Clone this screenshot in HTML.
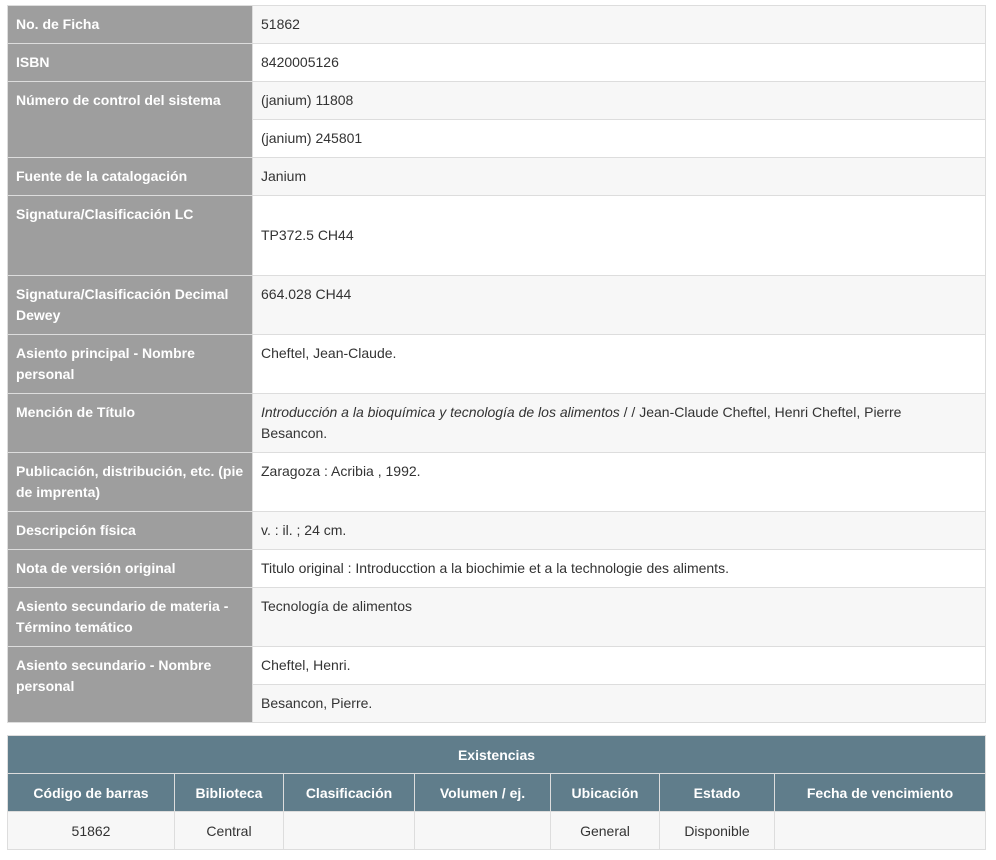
<!DOCTYPE html>
<html><head><meta charset="utf-8"><style>
body{margin:0;background:#fff;font-family:"Liberation Sans",sans-serif;font-size:14px;color:#333;}
table{border-collapse:collapse;position:absolute;left:7px;width:979px;}
#t1{top:5px;}
#t1 td{border:1px solid #ddd;padding:0 8px;vertical-align:top;line-height:21px;}
#t1 td.l{background:#9e9e9e;color:#fff;font-weight:bold;width:228px;border-color:#ddd;}
#t1 td.v{padding-top:8px;padding-bottom:8px;}
#t1 td.l{padding-top:8px;}
.g{background:#f7f7f7;}
#t2{top:735px;text-align:center;}
#t2 th{background:#607d8b;color:#fff;font-weight:bold;height:37px;padding:0;border:1px solid #ddd;}
#t2 td{height:37px;padding:0;border:1px solid #ddd;background:#f7f7f7;}
</style></head><body>
<table id="t1">
<tr style="height:38px"><td class="l">No. de Ficha</td><td class="v g">51862</td></tr>
<tr style="height:38px"><td class="l">ISBN</td><td class="v">8420005126</td></tr>
<tr style="height:38px"><td class="l" rowspan="2">Número de control del sistema</td><td class="v g">(janium) 11808</td></tr>
<tr style="height:38px"><td class="v">(janium) 245801</td></tr>
<tr style="height:38px"><td class="l">Fuente de la catalogación</td><td class="v g">Janium</td></tr>
<tr style="height:80px"><td class="l">Signatura/Clasificación LC</td><td class="v" style="vertical-align:middle">TP372.5 CH44</td></tr>
<tr style="height:59px"><td class="l">Signatura/Clasificación Decimal Dewey</td><td class="v g">664.028 CH44</td></tr>
<tr style="height:59px"><td class="l">Asiento principal - Nombre personal</td><td class="v">Cheftel, Jean-Claude.</td></tr>
<tr style="height:59px"><td class="l">Mención de Título</td><td class="v g"><i>Introducción a la bioquímica y tecnología de los alimentos</i> / / Jean-Claude Cheftel, Henri Cheftel, Pierre<br>Besancon.</td></tr>
<tr style="height:59px"><td class="l">Publicación, distribución, etc. (pie de imprenta)</td><td class="v">Zaragoza : Acribia , 1992.</td></tr>
<tr style="height:38px"><td class="l">Descripción física</td><td class="v g">v. : il. ; 24 cm.</td></tr>
<tr style="height:38px"><td class="l">Nota de versión original</td><td class="v">Titulo original : Introducction a la biochimie et a la technologie des aliments.</td></tr>
<tr style="height:59px"><td class="l">Asiento secundario de materia - Término temático</td><td class="v g">Tecnología de alimentos</td></tr>
<tr style="height:38px"><td class="l" rowspan="2">Asiento secundario - Nombre personal</td><td class="v">Cheftel, Henri.</td></tr>
<tr style="height:38px"><td class="v g">Besancon, Pierre.</td></tr>
</table>
<table id="t2">
<tr><th colspan="7">Existencias</th></tr>
<tr><th style="width:166px">Código de barras</th><th style="width:108px">Biblioteca</th><th style="width:130px">Clasificación</th><th style="width:135px">Volumen / ej.</th><th style="width:108px">Ubicación</th><th style="width:114px">Estado</th><th>Fecha de vencimiento</th></tr>
<tr><td>51862</td><td>Central</td><td></td><td></td><td>General</td><td>Disponible</td><td></td></tr>
</table>
</body></html>
